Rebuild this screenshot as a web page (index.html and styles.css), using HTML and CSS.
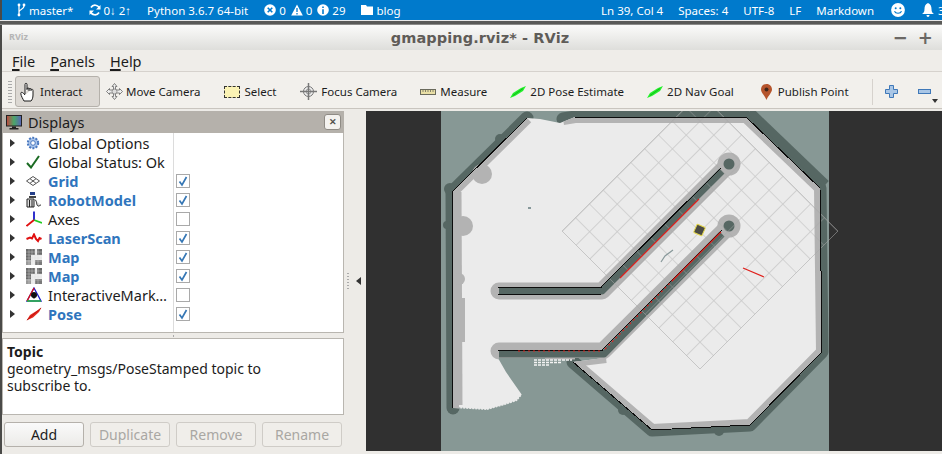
FILE: index.html
```html
<!DOCTYPE html>
<html lang="en">
<head>
<meta charset="utf-8">
<title>gmapping.rviz* - RViz</title>
<link rel="stylesheet" href="styles.css">
</head>
<body>
<svg class="defs" width="0" height="0" aria-hidden="true">
  <defs>
    <symbol id="i-map" viewBox="0 0 16 16">
      <rect width="16" height="16" fill="#eeeeee"/>
      <rect x="0" y="0" width="9" height="6" fill="#6a6a6a"/>
      <rect x="11" y="0" width="5" height="6" fill="#6a6a6a"/>
      <rect x="0" y="6" width="5" height="5" fill="#6a6a6a"/>
      <rect x="0" y="11" width="5" height="5" fill="#999"/>
      <rect x="9" y="11" width="7" height="5" fill="#7a7a7a"/>
      <path d="M3 0V16M6 0V16M9 0V16M12 0V16M0 3H16M0 6H16M0 9H16M0 12H16" stroke="#d8d8d8" stroke-width=".4"/>
    </symbol>
    <symbol id="i-tick" viewBox="0 0 14 14">
      <path d="M3.500 7.500 6 11 10.500 3" fill="none" stroke="#3677b5" stroke-width="1.700"/>
    </symbol>
    <symbol id="i-arrow" viewBox="0 0 16 12">
      <path d="M0 12 3 7 11 2 16 0 13 5 5 10Z" fill="#22f02a"/>
      <path d="M3 9.500 13 2.500" stroke="#12a818" stroke-width=".8"/>
    </symbol>
    <pattern id="grid-cell" width="19.52" height="19.52" patternUnits="userSpaceOnUse" patternTransform="translate(562 231) rotate(45)">
      <path d="M0 0H19.52M0 0V19.52" fill="none" stroke="#a8a8a8" stroke-opacity=".5" stroke-width="1.600"/>
    </pattern>
    <clipPath id="free-clip">
      <path d="M452 192 527 118 560 123 575 117 746 117 820 188 822 352 750 425 652 430 573 362 604 358 498 358 522 395 487 410 453 408Z"/>
    </clipPath>
    <linearGradient id="screen" x1="0" x2="1" y1="0" y2="0">
      <stop offset="0" stop-color="#c2453f"/>
      <stop offset=".5" stop-color="#4aa86a"/>
      <stop offset="1" stop-color="#5a62b8"/>
    </linearGradient>
  </defs>
</svg>

<header class="statusbar">
  <div class="sb-group">
    <span class="sb-item sb-branch">
      <svg class="sb-icon" width="9" height="14" viewBox="0 0 9 14"><path d="M2 1V13M2 9C2 6 7 7 7 3" fill="none" stroke="#fff" stroke-width="1.300"/><circle cx="2" cy="2" r="1.400" fill="#fff"/><circle cx="7" cy="2" r="1.400" fill="#fff"/><circle cx="2" cy="12" r="1.400" fill="#fff"/></svg>master*
    </span>
    <span class="sb-item sb-sync">
      <svg class="sb-icon" width="12" height="12" viewBox="0 0 12 12"><path d="M10.500 4.500A4.700 4.700 0 0 0 2 3.500M1.500 7.500A4.700 4.700 0 0 0 10 8.500" fill="none" stroke="#fff" stroke-width="1.700"/><path d="M11.500 1V5.500H7ZM.5 11V6.500H5Z" fill="#fff"/></svg>0↓ 2↑
    </span>
    <span class="sb-item">Python 3.6.7 64-bit</span>
    <span class="sb-item sb-problems">
      <svg class="sb-icon" width="12" height="12" viewBox="0 0 12 12"><circle cx="6" cy="6" r="5.800" fill="#fff"/><path d="M3.700 3.700 8.300 8.300M8.300 3.700 3.700 8.300" stroke="#007acc" stroke-width="1.600"/></svg><span class="sb-num">0</span>
      <svg class="sb-icon" width="12" height="12" viewBox="0 0 12 12"><path d="M6 .5 11.800 11.500H.2Z" fill="#fff"/><path d="M6 4V8M6 9V10.500" stroke="#007acc" stroke-width="1.300"/></svg><span class="sb-num">0</span>
      <svg class="sb-icon" width="12" height="12" viewBox="0 0 12 12"><circle cx="6" cy="6" r="5.800" fill="#fff"/><path d="M6 2.400V4M6 5.200V10" stroke="#007acc" stroke-width="1.600"/></svg><span class="sb-num">29</span>
    </span>
    <span class="sb-item sb-folder">
      <svg class="sb-icon" width="12" height="10" viewBox="0 0 12 10"><path d="M0 0H5L6 1.500H12V10H0Z" fill="#fff"/></svg>blog
    </span>
  </div>
  <div class="sb-group sb-right">
    <span class="sb-item">Ln 39, Col 4</span>
    <span class="sb-item">Spaces: 4</span>
    <span class="sb-item">UTF-8</span>
    <span class="sb-item">LF</span>
    <span class="sb-item">Markdown</span>
    <svg class="sb-smile" width="14" height="14" viewBox="0 0 14 14"><circle cx="7" cy="7" r="6.900" fill="#fff"/><circle cx="4.700" cy="5.200" r="1" fill="#007acc"/><circle cx="9.300" cy="5.200" r="1" fill="#007acc"/><path d="M3.500 8.200C4.500 11 9.500 11 10.500 8.200" fill="none" stroke="#007acc" stroke-width="1.100"/></svg>
    <span class="sb-bell">
      <svg width="12" height="14" viewBox="0 0 12 14"><path d="M6 0C8.500 1 9.500 3 9.500 6S10.500 10 12 11H0C1.500 10 2.500 9 2.500 6S3.500 1 6 0ZM4.500 12H7.500C7.500 14.500 4.500 14.500 4.500 12Z" fill="#fff"/></svg>3
    </span>
  </div>
</header>
<div class="seam"></div>

<div class="window">
  <div class="titlebar">
    <span class="rviz-logo">RViz</span>
    <h1 class="title">gmapping.rviz* - RViz</h1>
    <div class="winctl"><span>−</span><span>+</span><span>×</span></div>
  </div>

  <nav class="menubar">
    <span><u>F</u>ile</span>
    <span><u>P</u>anels</span>
    <span><u>H</u>elp</span>
  </nav>

  <div class="toolbar">
    <div class="grip"></div>
    <div class="tool tool-active">
      <svg width="16" height="20" viewBox="0 0 16 20"><path d="M5 12V2.500C5 .8 7 .8 7 2.500V8M7 7C7 5.500 9 5.500 9 7V9M9 7.500C9 6 11 6 11 7.500V9M11 8C11 6.800 13 6.800 13 8.500V13C13 16 12 18 11 19H4C3 17 1 14 .8 11.500 .6 10 2.500 9.500 5 13" fill="#fff" stroke="#1a1a1a" stroke-width="1"/></svg>
      Interact
    </div>
    <div class="tool tool-move">
      <svg width="17" height="17" viewBox="0 0 17 17"><path d="M8.500 .5 11 3.500H9.500V7H13.500V5.500L16.500 8.500 13.500 11.500V10H9.500V13.500H11L8.500 16.500 6 13.500H7.500V10H3.500V11.500L.5 8.500 3.500 5.500V7H7.500V3.500H6Z" fill="#eee" stroke="#666" stroke-width=".8"/><circle cx="8.500" cy="8.500" r="2.500" fill="#ddd" stroke="#666" stroke-width=".6"/></svg>
      Move Camera
    </div>
    <div class="tool tool-select">
      <span class="select-icon"></span>
      Select
    </div>
    <div class="tool tool-focus">
      <svg width="17" height="17" viewBox="0 0 17 17"><circle cx="8.500" cy="8.500" r="5" fill="#eee" stroke="#777"/><circle cx="8.500" cy="8.500" r="2.500" fill="none" stroke="#999"/><path d="M8.500 0V17M0 8.500H17" stroke="#777" stroke-width="1.500"/></svg>
      Focus Camera
    </div>
    <div class="tool tool-measure">
      <svg width="16" height="6" viewBox="0 0 16 6"><rect x=".5" y=".5" width="15" height="5" fill="#e9dfa6" stroke="#6a6a5c"/><path d="M3 1V3M5.500 1V3M8 1V3M10.500 1V3M13 1V3" stroke="#6a6a5c" stroke-width=".8"/></svg>
      Measure
    </div>
    <div class="tool tool-pose">
      <svg width="16" height="12"><use href="#i-arrow"/></svg>
      2D Pose Estimate
    </div>
    <div class="tool tool-nav">
      <svg width="16" height="12"><use href="#i-arrow"/></svg>
      2D Nav Goal
    </div>
    <div class="tool tool-publish">
      <svg width="11" height="16" viewBox="0 0 11 16"><path d="M5.500 0C9 0 11 2.500 11 5.500 11 8.500 7 12 5.500 16 4 12 0 8.500 0 5.500 0 2.500 2 0 5.500 0Z" fill="#b5542c"/><circle cx="5.500" cy="5.500" r="2" fill="#40271b"/></svg>
      Publish Point
    </div>
    <div class="tool-sep"></div>
    <svg class="tool-plus" width="13" height="13" viewBox="0 0 13 13"><path d="M4.500 .5H8.500V4.500H12.500V8.500H8.500V12.500H4.500V8.500H.5V4.500H4.500Z" fill="#a9c6e6" stroke="#3f78b8"/></svg>
    <svg class="tool-minus" width="13" height="5" viewBox="0 0 13 5"><rect x=".5" y=".5" width="12" height="4" fill="#a9c6e6" stroke="#3f78b8"/></svg>
    <span class="tool-more"></span>
  </div>

  <main class="workspace">
    <aside class="sidebar">
      <section class="panel">
        <div class="panel-head">
          <svg width="16" height="15" viewBox="0 0 16 15"><rect x=".5" y=".5" width="15" height="10.500" fill="url(#screen)" stroke="#222"/><path d="M6 11.500H10V13H12.500V14.500H3.500V13H6Z" fill="#222"/></svg>
          <span class="panel-title">Displays</span>
          <button class="panel-close" type="button">✕</button>
        </div>
        <ul class="tree">
          <li class="row">
            <span class="caret"></span>
            <svg class="row-icon" width="14" height="14" viewBox="0 0 14 14"><circle cx="7" cy="7" r="5.200" fill="#a9c4ea" stroke="#4a78c0" stroke-width="2" stroke-dasharray="2 1.300"/><circle cx="7" cy="7" r="2.300" fill="#fff" stroke="#4a78c0"/></svg>
            <span class="row-label">Global Options</span>
          </li>
          <li class="row">
            <span class="caret"></span>
            <svg class="row-icon" width="14" height="14" viewBox="0 0 14 14"><path d="M1 8 5 12.500 13 1" fill="none" stroke="#1b6b23" stroke-width="2"/></svg>
            <span class="row-label">Global Status: Ok</span>
          </li>
          <li class="row">
            <span class="caret"></span>
            <svg class="row-icon" width="14" height="10" viewBox="0 0 14 10"><path d="M7 .5 13.500 5 7 9.500 .5 5ZM4 2.700 10 7.300M10 2.700 4 7.300" fill="#fff" stroke="#555"/></svg>
            <span class="row-label row-on">Grid</span>
            <span class="check on"><svg width="14" height="14"><use href="#i-tick"/></svg></span>
          </li>
          <li class="row">
            <span class="caret"></span>
            <svg class="row-icon" width="16" height="16" viewBox="0 0 16 16"><rect x="4" y="0" width="5" height="3" fill="#26408a"/><rect x="3" y="4" width="7" height="2" fill="#444"/><path d="M1 7H8V15H1ZM9 8C11 8 10 13 12 14 13 14.500 14 13 15 13" fill="#ddd" stroke="#222"/><path d="M3.500 8V15M6 8V15" stroke="#222"/></svg>
            <span class="row-label row-on">RobotModel</span>
            <span class="check on"><svg width="14" height="14"><use href="#i-tick"/></svg></span>
          </li>
          <li class="row">
            <span class="caret"></span>
            <svg class="row-icon" width="16" height="16" viewBox="0 0 16 16"><path d="M8 9V.5" stroke="#1a1ac8" stroke-width="1.800"/><path d="M8 9 16 12" stroke="#22cc22" stroke-width="1.800"/><path d="M8 9 .5 15" stroke="#e01010" stroke-width="1.800"/></svg>
            <span class="row-label">Axes</span>
            <span class="check"></span>
          </li>
          <li class="row">
            <span class="caret"></span>
            <svg class="row-icon" width="16" height="10" viewBox="0 0 16 10"><path d="M.5 6 4 4.500 6 5.500 8 1.500 10 6 12 8 13.500 5 15.500 6" fill="none" stroke="#e01010" stroke-width="2"/></svg>
            <span class="row-label row-on">LaserScan</span>
            <span class="check on"><svg width="14" height="14"><use href="#i-tick"/></svg></span>
          </li>
          <li class="row">
            <span class="caret"></span>
            <svg class="row-icon" width="16" height="16"><use href="#i-map"/></svg>
            <span class="row-label row-on">Map</span>
            <span class="check on"><svg width="14" height="14"><use href="#i-tick"/></svg></span>
          </li>
          <li class="row">
            <span class="caret"></span>
            <svg class="row-icon" width="16" height="16"><use href="#i-map"/></svg>
            <span class="row-label row-on">Map</span>
            <span class="check on"><svg width="14" height="14"><use href="#i-tick"/></svg></span>
          </li>
          <li class="row">
            <span class="caret"></span>
            <svg class="row-icon" width="16" height="16" viewBox="0 0 16 16"><path d="M8 1 15 14H1Z" fill="none" stroke="#1a1ac8" stroke-width="1.300"/><path d="M8 1 1 14" stroke="#e01010" stroke-width="1.300"/><path d="M15 14H1" stroke="#22cc22" stroke-width="1.300"/><circle cx="8" cy="8" r="3" fill="#111"/><path d="M5 8H11L8 12Z" fill="#111"/></svg>
            <span class="row-label">InteractiveMark…</span>
            <span class="check"></span>
          </li>
          <li class="row">
            <span class="caret"></span>
            <svg class="row-icon" width="16" height="14" viewBox="0 0 16 14"><path d="M.5 13.500 4 8 12 3 15.500 .5 13 5 7 10.500Z" fill="#e8281c"/><path d="M1 13 15 1" stroke="#a01010" stroke-width=".7"/></svg>
            <span class="row-label row-on">Pose</span>
            <span class="check on"><svg width="14" height="14"><use href="#i-tick"/></svg></span>
          </li>
        </ul>
      </section>
      <div class="split-h"></div>
      <section class="description">
        <strong class="desc-title">Topic</strong>
        <p class="desc-text">geometry_msgs/PoseStamped topic to<br>subscribe to.</p>
      </section>
      <div class="actions">
        <button class="btn" type="button">Add</button>
        <button class="btn" type="button" disabled>Duplicate</button>
        <button class="btn" type="button" disabled>Remove</button>
        <button class="btn" type="button" disabled>Rename</button>
      </div>
    </aside>

    <div class="split-v"><span class="split-dots"></span><span class="split-arrow"></span></div>

    <div class="viewport">
      <svg class="scene" viewBox="366 111 576 340" width="576" height="340">
        <rect x="366" y="111" width="576" height="340" fill="#303030"/>
        <rect x="441" y="111" width="388" height="340" fill="#879895"/>
        <g fill="none" stroke-linejoin="round">
          <!-- outer inflated walls -->
          <path class="wall-dark" d="M453 408 452 192 527 118M563 119 575 117 746 117 820 188 822 352 750 425 652 430 573 362"/>
          <g fill="#566763">
            <circle cx="453" cy="408" r="6"/>
            <circle cx="563" cy="120" r="6"/>
            <circle cx="450" cy="189" r="6"/>
            <circle cx="447" cy="225" r="4"/>
            <circle cx="500" cy="139" r="5"/>
            <circle cx="453" cy="368" r="6"/>
            <circle cx="719" cy="431" r="5"/>
            <circle cx="776" cy="397" r="5"/>
            <circle cx="623" cy="410" r="5"/>
          </g>
          <path d="M750 111 826 184" stroke="#566763" stroke-width="8"/>
          <!-- free space -->
          <path fill="#ebebeb" d="M452 192 527 118 540 119 560 123 575 117 746 117 820 188 822 352 750 425 652 430 573 362 604 358 498 358 506 372 522 395 517 401 505 405 487 410 470 409 453 408Z"/>
          <path class="frontier" d="M522 395 517 401 505 405 487 410 470 409 458 408"/>
          <!-- inner cost band -->
          <g clip-path="url(#free-clip)">
            <path class="wall-gray" d="M453 408 452 192 527 118M563 119 575 117 746 117 820 188 822 352 750 425 652 430 573 362"/>
            <path d="M458 405 457 192" stroke="#b3b3b3" stroke-width="9"/>
            <path d="M460 298V342" stroke="#b3b3b3" stroke-width="10"/>
            <path class="arm-gray" d="M499 351H603L729 226"/>
            <path d="M573 362 606 358" stroke="#b3b3b3" stroke-width="10"/>
          </g>
          <!-- frontier scatter under the lower arm -->
          <path d="M545 358H575" stroke="#b3b3b3" stroke-width="3"/>
          <path class="scatter" d="M534 360H572M534 362.500H562M534 365H550"/>
          <circle cx="482" cy="174" r="10" fill="#b3b3b3"/>
          <circle cx="463" cy="226" r="10" fill="#b3b3b3"/>
          <circle cx="459" cy="279" r="6" fill="#b3b3b3"/>
          <!-- arms -->
          <path class="arm-gray" d="M499 291H602L729 164"/>
          <circle cx="729" cy="164" r="11.500" fill="#b3b3b3"/>
          <circle cx="729" cy="226" r="11.500" fill="#b3b3b3"/>
          <path class="arm-dark" d="M499 291H602L722 171"/>
          <path class="arm-dark" d="M499 354H604L722 234"/>
          <circle cx="729" cy="164" r="5.500" fill="#566763"/>
          <circle cx="729" cy="226" r="5.500" fill="#566763"/>
          <!-- grid -->
          <path fill="url(#grid-cell)" stroke="#a8a8a8" stroke-opacity=".5" d="M562 231 700 93 838 231 700 369Z"/>
          <!-- occupied cells -->
          <path class="wall-black" d="M453 408 452 192 527 118M575 117 746 117 820 188 822 352 750 425 652 430 573 362"/>
          <path class="wall-black" d="M498 287.500H602M498 294.500H601M498 350.500H603M600 288 721 168M602 350 722 230"/>
          <!-- laser -->
          <path class="laser" d="M620 278 699 199M672 281 721 232M743 268 764 277"/>
          <path class="laser-dots" d="M518 351H602M605 349 672 281"/>
        </g>
        <!-- robot -->
        <rect x="695" y="225.500" width="9" height="9" rx="1" fill="#4a4a44" stroke="#e4d64a" stroke-width="1" transform="rotate(24 699.500 230)"/>
        <path d="M661 262 665 256 673 250" fill="none" stroke="#87989a" stroke-width="1.200"/>
        <rect x="528" y="207" width="3" height="2" fill="#87989a"/>
      </svg>
    </div>
  </main>
</div>
</body>
</html>
```

FILE: styles.css
```css
* { box-sizing: border-box; }
html, body { margin: 0; height: 100%; overflow: hidden; }
body {
  width: 942px;
  height: 454px;
  background: #edebe7;
  font-family: "Noto Sans", "Open Sans", sans-serif;
  font-size: 13px;
  color: #1c1c1c;
  display: flex;
  flex-direction: column;
}
.defs { position: absolute; }

/* VS Code status bar */
.statusbar {
  height: 20px;
  flex: none;
  background: #007acc;
  color: #fff;
  font-size: 11.500px;
  display: flex;
  justify-content: space-between;
  padding-left: 15px;
  border-left: 2px solid #4a4a48;
  white-space: nowrap;
  overflow: hidden;
}
.sb-group { display: flex; align-items: center; gap: 16px; }
.sb-item { display: flex; align-items: center; }
.sb-icon { flex: none; margin-right: 3px; }
.sb-branch .sb-icon { margin-right: 3px; }
.sb-sync .sb-icon { margin-right: 2px; }
.sb-num { margin-right: 5px; }
.sb-problems .sb-num:last-child { margin-right: 0; }
.sb-right { margin-right: -10px; gap: 15px; }
.sb-smile { margin-left: 2px; }
.sb-bell { display: flex; align-items: center; gap: 4px; width: 30px; margin-left: 2px; }
.seam {
  height: 5px;
  flex: none;
  background: #5a5a58;
  border-top: 1px solid #e9e9e9;
  border-bottom: 1px solid #8c8c8a;
}

/* RViz window */
.window {
  flex: 1;
  min-height: 0;
  display: flex;
  flex-direction: column;
  border-left: 2px solid #4a4a48;
}
.titlebar {
  height: 25px;
  flex: none;
  display: flex;
  align-items: center;
  justify-content: center;
  position: relative;
  background: linear-gradient(#fbfbfa, #dededb);
}
.rviz-logo {
  position: absolute;
  left: 7px;
  top: 5px;
  font-size: 9px;
  font-weight: 700;
  color: #b5b5b5;
}
.title {
  margin: 0 0 0 16px;
  font: 700 14.500px "DejaVu Sans", sans-serif;
  letter-spacing: .1px;
  color: #5f5c58;
}
.winctl {
  position: absolute;
  right: -16px;
  top: 2px;
  display: flex;
  gap: 10px;
  font: 700 18px "DejaVu Sans", sans-serif;
  color: #6b6865;
}
.menubar {
  height: 22px;
  flex: none;
  display: flex;
  align-items: center;
  gap: 15px;
  padding-left: 10px;
  font-size: 14.500px;
  background: #efede9;
  border-bottom: 1px solid #d6d2cd;
}
.menubar u { text-underline-offset: 2px; text-decoration-thickness: 2px; }
.toolbar {
  height: 37px;
  flex: none;
  display: flex;
  align-items: center;
  padding: 3px 0 0 6px;
  font-size: 11.500px;
  background: #f2f0ec;
  border-bottom: 1px solid #c9c5bf;
  white-space: nowrap;
  position: relative;
}
.grip {
  width: 4px;
  height: 24px;
  flex: none;
  margin-right: 3px;
  background: radial-gradient(circle, #aaa 0.6px, transparent 0.8px) 0 0 / 2px 3px;
}
.tool { display: flex; flex: none; align-items: center; gap: 4px; height: 31px; }
.tool-active {
  width: 85px;
  padding-left: 4px;
  background: #dcd8d3;
  border: 1px solid #b5b1ab;
  border-radius: 3px;
}
.tool-move { margin-left: 6px; gap: 3px; }
.tool-select { margin-left: 24px; }
.tool-focus { margin-left: 24px; }
.tool-measure { margin-left: 23px; }
.tool-pose { margin-left: 23px; }
.tool-nav { margin-left: 23px; }
.tool-publish { margin-left: 27px; gap: 6px; }
.select-icon {
  width: 16px;
  height: 12px;
  background: #fbf3b5;
  border: 1px dashed #333;
}
.tool-sep { width: 1px; height: 26px; flex: none; background: #d6d2cd; margin-left: 23px; }
.tool-plus { margin-left: 12px; flex: none; }
.tool-minus { margin-left: 20px; flex: none; }
.tool-more {
  position: absolute;
  right: 4px;
  bottom: 5px;
  border: 3px solid transparent;
  border-top: 4px solid #333;
  border-bottom: 0;
}

/* Workspace */
.workspace { flex: 1; min-height: 0; display: flex; padding-top: 2px; }
.sidebar { width: 342px; flex: none; display: flex; flex-direction: column; }
.panel { flex: none; }
.panel-head {
  height: 22px;
  display: flex;
  align-items: center;
  gap: 6px;
  padding: 0 3px 0 4px;
  background: #b5b1ab;
  font-size: 14.500px;
}
.panel-title { flex: 1; }
.panel-close {
  width: 17px;
  height: 16px;
  padding: 0;
  border: 1px solid #8f8b85;
  border-radius: 3px;
  background: #f4f2ef;
  color: #55524e;
  font-size: 9px;
  font-weight: 700;
  line-height: 1;
}
.tree {
  height: 200px;
  margin: 0;
  padding: 0;
  list-style: none;
  border: 1px solid #b9b6b0;
  border-top: 0;
  background: linear-gradient(#dcdcdc, #dcdcdc) 170px 0 / 1px 100% no-repeat #fff;
  font-size: 14.500px;
}
.row { height: 19px; display: flex; align-items: center; position: relative; }
.caret {
  margin-left: 7px;
  flex: none;
  border: 4px solid transparent;
  border-left: 5px solid #333;
  border-right: 0;
}
.row-icon { flex: none; position: absolute; left: 23px; top: 50%; transform: translateY(-50%); }
.row-label { margin-left: 33px; white-space: nowrap; }
.row-on { color: #2f75bd; font-weight: 700; }
.check {
  position: absolute;
  left: 173px;
  top: 3px;
  width: 14px;
  height: 14px;
  border: 1px solid #a9a9a9;
  background: #fff;
  display: block;
}
.check svg { display: block; margin: -1px; }
.split-h {
  height: 5px;
  flex: none;
  background: radial-gradient(circle, #aaa 0.5px, transparent 0.8px) center / 3px 2px no-repeat;
}
.description {
  height: 77px;
  flex: none;
  padding: 4px 4px;
  background: #fff;
  border: 1px solid #b9b6b0;
  font-size: 14px;
  line-height: 17px;
}
.desc-title { display: block; }
.desc-text { margin: 0; }
.actions { display: flex; gap: 6px; padding: 7px 2px 0; }
.btn {
  width: 80px;
  height: 25px;
  padding: 0;
  font: 14px "Noto Sans", sans-serif;
  color: #1c1c1c;
  background: linear-gradient(#fafafa, #ecebe8);
  border: 1px solid #b5b1ab;
  border-radius: 3px;
}
.btn:disabled { color: #a9a7a3; background: #f0eeea; border-color: #cfccc7; }

.split-v {
  width: 22px;
  flex: none;
  display: flex;
  align-items: center;
  padding: 0 0 0 3px;
  gap: 7px;
  height: 340px;
}
.split-dots {
  width: 2px;
  height: 18px;
  background: radial-gradient(circle, #aaa 0.6px, transparent 0.8px) 0 0 / 2px 3px;
}
.split-arrow {
  border: 4px solid transparent;
  border-right: 5px solid #333;
  border-left: 0;
}
.viewport { width: 576px; height: 340px; flex: none; }
.scene { display: block; }
.wall-dark { stroke: #566763; stroke-width: 13; stroke-linecap: round; }
.wall-gray { stroke: #b3b3b3; stroke-width: 12; }
.wall-black { stroke: #0c0c0c; stroke-width: 1; shape-rendering: crispEdges; }
.arm-gray { stroke: #b3b3b3; stroke-width: 17; stroke-linecap: round; }
.arm-dark { stroke: #566763; stroke-width: 7; }
.frontier { stroke: #879895; stroke-width: 1.500; stroke-dasharray: 1 2; }
.scatter { stroke: #f4f4f4; stroke-width: 1.500; stroke-dasharray: 3 1; }
.laser { stroke: #e0201c; stroke-width: 1.200; }
.laser-dots { stroke: #e0201c; stroke-width: 1.200; stroke-dasharray: 2 3; }
```
